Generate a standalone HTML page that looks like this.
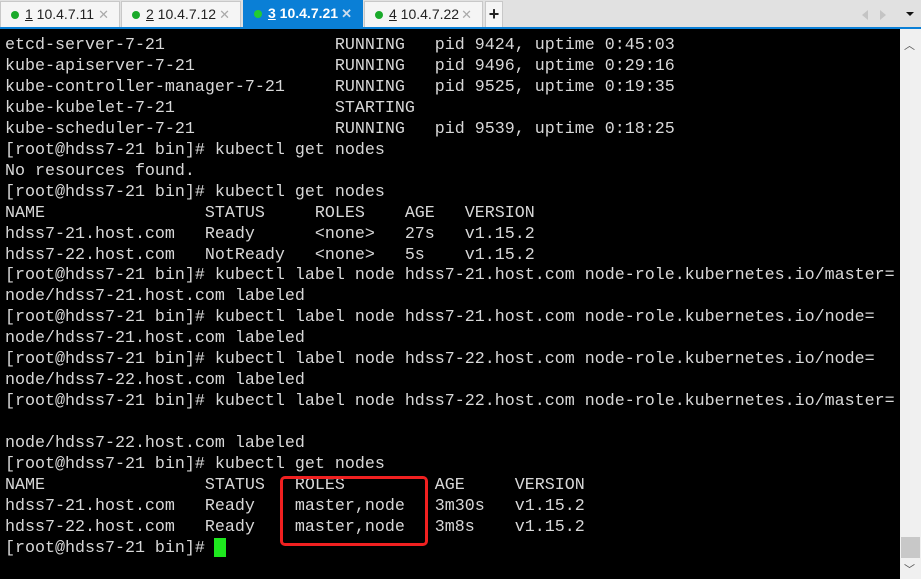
<html><head><style>
body{margin:0;width:921px;height:579px;background:#000;overflow:hidden;position:relative;font-family:"Liberation Sans",sans-serif}
.bar{position:absolute;left:0;top:0;width:921px;height:27px;background:#e1e1e1}
.line{position:absolute;left:0;top:27px;width:921px;height:2px;background:#0a7fd6}
.tab{position:absolute;top:1px;height:26px;background:#f5f5f5;border:1px solid #c8c8c8;border-bottom:none;box-sizing:border-box;font-size:14px;line-height:25px;color:#222}
.tab .d{position:absolute;left:10px;top:9px;width:8px;height:8px;border-radius:50%;background:#1aaa2a}
.tab .t{position:absolute;left:24px}
.tab .x{position:absolute;right:10px;color:#aaa;font-size:13px}
.tab.a{background:#0a7fd6;color:#fff;border-color:#0a7fd6;font-weight:bold}
.tab.a .d{background:#22cc33}.tab.a .x{color:#cde}
pre{position:absolute;left:5px;top:36px;margin:0;font-family:"Liberation Mono",monospace;font-size:16.67px;line-height:20.95px;color:#d8d8d8}
.sb{position:absolute;left:900px;top:29px;width:21px;height:550px;background:#f0f0f0}
.box{position:absolute;left:280px;top:476px;width:148px;height:70px;border:3px solid #f02020;border-radius:5px;box-sizing:border-box}
.cur{position:absolute;left:214px;top:538px;width:12px;height:19px;background:#1ee81e}
</style></head><body>
<div class="bar"></div><div class="line"></div>
<div class="tab" style="left:0;width:120px"><span class="d"></span><span class="t"><u>1</u> 10.4.7.11</span><span class="x">✕</span></div>
<div class="tab" style="left:121px;width:120px"><span class="d"></span><span class="t"><u>2</u> 10.4.7.12</span><span class="x">✕</span></div>
<div class="tab a" style="left:243px;width:120px;top:0;height:27px"><span class="d"></span><span class="t"><u>3</u> 10.4.7.21</span><span class="x">✕</span></div>
<div class="tab" style="left:364px;width:119px"><span class="d"></span><span class="t"><u>4</u> 10.4.7.22</span><span class="x">✕</span></div>
<div class="tab" style="left:485px;width:18px;font-size:18px;text-align:center;font-weight:bold;line-height:24px">+</div>
<div style="position:absolute;left:862px;top:10px;width:0;height:0;border-top:5px solid transparent;border-bottom:5px solid transparent;border-right:6px solid #c4c4c4"></div>
<div style="position:absolute;left:880px;top:10px;width:0;height:0;border-top:5px solid transparent;border-bottom:5px solid transparent;border-left:6px solid #c4c4c4"></div>
<div style="position:absolute;left:906px;top:12px;width:0;height:0;border-left:4px solid transparent;border-right:4px solid transparent;border-top:4px solid #111"></div>
<div class="sb"><div style="position:absolute;left:4px;top:8px;color:#555;font-size:11px">︿</div><div style="position:absolute;left:1px;top:508px;width:19px;height:21px;background:#c8c8c8"></div><div style="position:absolute;left:4px;top:532px;color:#555;font-size:11px">﹀</div></div>
<pre>etcd-server-7-21                 RUNNING   pid 9424, uptime 0:45:03
kube-apiserver-7-21              RUNNING   pid 9496, uptime 0:29:16
kube-controller-manager-7-21     RUNNING   pid 9525, uptime 0:19:35
kube-kubelet-7-21                STARTING
kube-scheduler-7-21              RUNNING   pid 9539, uptime 0:18:25
[root@hdss7-21 bin]# kubectl get nodes
No resources found.
[root@hdss7-21 bin]# kubectl get nodes
NAME                STATUS     ROLES    AGE   VERSION
hdss7-21.host.com   Ready      &lt;none&gt;   27s   v1.15.2
hdss7-22.host.com   NotReady   &lt;none&gt;   5s    v1.15.2
[root@hdss7-21 bin]# kubectl label node hdss7-21.host.com node-role.kubernetes.io/master=
node/hdss7-21.host.com labeled
[root@hdss7-21 bin]# kubectl label node hdss7-21.host.com node-role.kubernetes.io/node=
node/hdss7-21.host.com labeled
[root@hdss7-21 bin]# kubectl label node hdss7-22.host.com node-role.kubernetes.io/node=
node/hdss7-22.host.com labeled
[root@hdss7-21 bin]# kubectl label node hdss7-22.host.com node-role.kubernetes.io/master=

node/hdss7-22.host.com labeled
[root@hdss7-21 bin]# kubectl get nodes
NAME                STATUS   ROLES         AGE     VERSION
hdss7-21.host.com   Ready    master,node   3m30s   v1.15.2
hdss7-22.host.com   Ready    master,node   3m8s    v1.15.2
[root@hdss7-21 bin]# </pre>
<div class="box"></div><div class="cur"></div>
</body></html>
